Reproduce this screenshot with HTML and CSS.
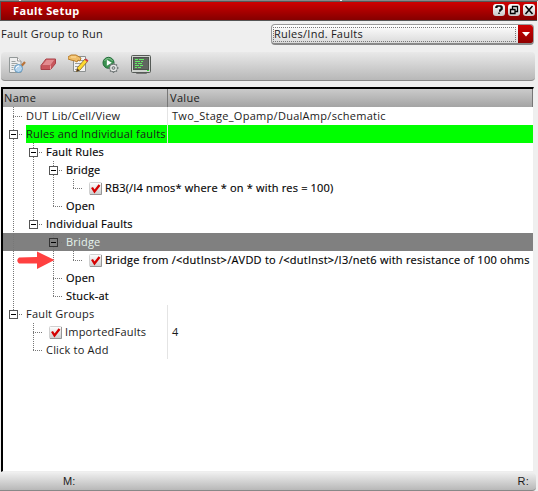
FILE: index.html
```html
<!DOCTYPE html>
<html lang="en">
<head>
<meta charset="utf-8">
<title>Fault Setup</title>
<link rel="stylesheet" href="styles.css">
</head>
<body>
<svg width="0" height="0" class="defs"><defs>
<linearGradient id="btn" x2="0" y2="1"><stop stop-color="#fff"/><stop offset="1" stop-color="#c8c8c8"/></linearGradient>
<linearGradient id="box" x2="0" y2="1"><stop stop-color="#fff"/><stop offset="1" stop-color="#ccc"/></linearGradient>
<symbol id="check" viewBox="0 0 13 13"><rect x=".5" y=".5" width="12" height="12" rx="1" fill="url(#box)" stroke="#d0d0d0"/><path d="M1 12.5h11.5V1" fill="none" stroke="#969696"/><path d="M3 5.500l2.500 4 5-6.500" fill="none" stroke="#d40000" stroke-width="2.300"/></symbol>
</defs></svg>
<div class="window">
  <div class="edge"><i></i><i></i><i></i></div>
  <header class="title"><span>Fault Setup</span>
    <div class="controls">
      <svg width="12" height="12" viewBox="0 0 12 12"><rect width="12" height="12" rx="3" fill="url(#btn)"/><path d="M3 4V3h1V2h4v1h1v2H8v1H7v1H6M6 8.500v1.500" fill="none" stroke="#000" stroke-width="1.5"/></svg>
      <svg width="12" height="12" viewBox="0 0 12 12"><rect width="12" height="12" rx="3" fill="url(#btn)"/><path d="M4.500 5V2.500h5v5H7M4 2.500h6M2.500 5.500h4.500v4h-4.500zM2 5.500h5.500" fill="none" stroke="#000" stroke-width="1.3"/></svg>
      <svg width="12" height="12" viewBox="0 0 12 12"><rect width="12" height="12" rx="3" fill="url(#btn)"/><path d="M2.500 2l7 8M9.500 2l-7 8" stroke="#000" stroke-width="1.5"/></svg>
    </div>
  </header>
  <div class="form"><span class="label">Fault Group to Run</span>
    <div class="select"><span class="choice">Rules/Ind. Faults</span><span class="drop"><svg width="8" height="5" viewBox="0 0 8 5"><path d="M0 0h8L4 4.500z" fill="#fff"/></svg></span></div>
  </div>
  <div class="toolbar">
    <svg width="17" height="17" viewBox="0 0 17 17"><path d="M.5.5h8l3.500 3.500v11.500H.5z" fill="#eee" stroke="#929898"/><path d="M8.500.5V4H12" fill="#fff" stroke="#999"/><path d="M2.500 4.500h4M2.500 6.500h6M2.500 8.500h3M2.500 10.500h2M2.500 12.500h2" stroke="#9da3a3"/><path d="M12.500 9l3.500-4" stroke="#b8733a" stroke-width="2.200"/><circle cx="9.500" cy="11.500" r="4" fill="#b5d5ef" stroke="#6297bd"/><path d="M7 11.500a3 3 0 013-2.500" stroke="#fff" fill="none"/></svg>
    <svg width="17" height="17" viewBox="0 0 17 17"><path d="M1 8.500L6 2h9.500v4.500L10.500 12.500H1z" fill="#c9565c" stroke="#a83e46"/><path d="M1.500 8.500L6.500 2.500h8.500L10.500 8.500z" fill="#e38b8f" stroke="#bd5056" stroke-width=".7"/><path d="M10.500 8.500v4" stroke="#eba0a2"/></svg>
    <svg width="21" height="20" viewBox="0 0 21 20"><path d="M5.500 2.500h12v15h-12z" fill="#f2f2f2" stroke="#8c9090"/><path d="M7 6.500h9M7 9.500h8M7 12.500h5M7 15.500h4" stroke="#9a9e9e"/><path d="M0 3l3-2h5l5 3-1 3-2-1-1 2-2-1-4-1-3-1z" fill="#efbd68" stroke="#b77d2b"/><path d="M3 3h5" stroke="#ffe0a0"/><path d="M8.500 17.500l1-4 7.500-8.500 2.500 2.500-7.500 8.500z" fill="#ffd92f" stroke="#81652b" stroke-width=".8"/><path d="M16.500 5.500l2.500 2.500 1.500-1.500-2.500-2z" fill="#cf3a45"/><path d="M8.500 17.500l1-3 2 2z" fill="#483321"/></svg>
    <svg width="17" height="18" viewBox="0 0 17 18"><circle cx="6.500" cy="6.800" r="5.500" fill="#3b9150" stroke="#206b38"/><path d="M2.500 5a4.500 4.500 0 018 0" fill="none" stroke="#8fcb98"/><path d="M4.800 3.800l5 3-5 3z" fill="#fff"/><g transform="translate(11.500 12)"><circle r="3.800" fill="#ededed" stroke="#676e6e"/><path d="M0-5v10M-5 0H5M-3.500-3.500l7 7M3.500-3.500l-7 7" stroke="#717878" stroke-width="1.500"/><circle r="3.300" fill="#e8e8e8"/><circle r="1.400" fill="#c5c8c8" stroke="#6e7474"/></g></svg>
    <svg width="21" height="20" viewBox="0 0 21 20"><path d="M6 17h9l1 2H5z" fill="#777"/><rect x=".5" y=".5" width="19" height="17" rx="1" fill="#d0d3cf" stroke="#555a56"/><rect x="2.500" y="2.500" width="15" height="12" fill="#606660" stroke="#4d524d"/><path d="M4 4.500h3m1 0h5M4 6.500h5m1 0h2M4 8.500h2m1 0h4M4 10.500h4m1 0h3M4 12.500h2m1 0h3" stroke="#65ee65"/><path d="M16 15.500h2" stroke="#37df37"/></svg>
  </div>
  <main class="tree">
    <div class="head"><span>Name</span><span>Value</span></div>
    <div class="row cols"><div class="name"><i class="g tee"></i><span class="t">DUT Lib/Cell/View</span></div><span class="val">Two_Stage_Opamp/DualAmp/schematic</span></div>
    <div class="row cols green"><div class="name"><i class="g tee"><b></b></i><span class="t">Rules and Individual faults</span></div><span class="val"></span></div>
    <div class="row strong"><i class="g bar"></i><i class="g tee"><b></b></i><span class="t rules">Fault Rules</span></div>
    <div class="row strong"><i class="g bar"></i><i class="g bar"></i><i class="g tee"><b></b></i><span class="t">Bridge</span></div>
    <div class="row strong"><i class="g bar"></i><i class="g bar"></i><i class="g bar"></i><i class="g end"></i><svg class="check"><use href="#check"/></svg><span class="c rb">RB3(/I4 nmos* where * on * with res = 100)</span></div>
    <div class="row strong"><i class="g bar"></i><i class="g bar"></i><i class="g end"></i><span class="t">Open</span></div>
    <div class="row strong"><i class="g bar"></i><i class="g end"><b></b></i><span class="t">Individual Faults</span></div>
    <div class="row selected"><i class="g bar"></i><i class="g"></i><i class="g tee"><b></b></i><span class="t">Bridge</span></div>
    <div class="row strong pointed"><i class="g bar"></i><i class="g"></i><i class="g bar"></i><i class="g end"></i><svg class="check"><use href="#check"/></svg><span class="c br">Bridge from /&lt;dutInst&gt;/AVDD to /&lt;dutInst&gt;/I3/net6 with resistance of 100 ohms</span>
      <svg class="arrow" width="38" height="18" viewBox="0 0 38 18"><path d="M2 6.500l18-.5V.5L37.500 9 20 18V12.500L2 12.500Q-1.500 9.500 2 6.500z" fill="#ff4040"/></svg></div>
    <div class="row strong"><i class="g bar"></i><i class="g"></i><i class="g tee"></i><span class="t">Open</span></div>
    <div class="row strong"><i class="g bar"></i><i class="g"></i><i class="g end"></i><span class="t">Stuck-at</span></div>
    <div class="row cols"><div class="name"><i class="g end"><b></b></i><span class="t">Fault Groups</span></div><span class="val"></span></div>
    <div class="row cols"><div class="name"><i class="g"></i><i class="g tee"></i><svg class="check"><use href="#check"/></svg><span class="c">ImportedFaults</span></div><span class="val">4</span></div>
    <div class="row cols"><div class="name"><i class="g"></i><i class="g end"></i><span class="t">Click to Add</span></div><span class="val"></span></div>
  </main>
  <footer class="status"><span>M:</span><span>R:</span></footer>
</div>
</body>
</html>
```
FILE: styles.css
```css
* { box-sizing: border-box; }
body { margin: 0; background: #efefef; color: #1b1b1b; font: 11px/18px "Open Sans", "Noto Sans", sans-serif; font-feature-settings: "calt" 0; letter-spacing: .2px; }
.defs { position: absolute; }
svg { flex: none; display: block; }
.window { width: 538px; height: 491px; display: flex; flex-direction: column; overflow: hidden; white-space: nowrap; }
.edge { height: 1px; display: flex; gap: 2px; background: #eee; }
.edge i { flex: 1; background: #888; }
.edge i:first-child { flex: 0 0 19px; }
.edge i:nth-child(2) { flex: 0 0 319px; }
.title { height: 20px; margin-right: 1px; padding: 0 2px 0 12px; display: flex; align-items: center; justify-content: space-between; border: solid #555; border-width: 1px 0 1px 1px; background: linear-gradient(#cf0000, #850000); color: #fff; font-weight: bold; }
.title span { letter-spacing: .38px; line-height: 16px; }
.controls { display: flex; gap: 3px; margin-top: -2px; }
.form { height: 31px; padding: 3px 4px 0 1px; display: flex; justify-content: space-between; align-items: flex-start; }
.label { padding-top: 1px; letter-spacing: .27px; }
.select { width: 263px; height: 21px; display: flex; border: 1px solid #999; border-bottom: 2px solid #888; border-radius: 4px; background: linear-gradient(#fff, #dadada); overflow: hidden; }
.choice { flex: 1; margin: 2px 2px 1px 1px; border: 1px dotted #777; line-height: 12px; letter-spacing: .26px; }
.drop { width: 16px; margin-right: -1px; display: flex; align-items: center; justify-content: center; background: linear-gradient(#d00000, #900000); }
.toolbar { height: 29px; margin: 0 3px 0 1px; padding: 0 8px 2px; display: flex; align-items: center; gap: 14px; border-bottom: 1px solid #888; border-radius: 4px; background: linear-gradient(#e9e9e9, #b8b8b8); }
.toolbar svg:nth-child(3) { margin: -2px -2px 0 -3px; }
.toolbar svg:nth-child(4) { margin-left: 1px; }
.toolbar svg:nth-child(5) { margin-left: -2px; }
.tree { height: 385px; margin: 6px 4px 0 1px; border: solid #000; border-width: 2px 1px 1px 2px; border-right-color: #eee; border-bottom-color: #eee; background: #fff; }
.head { height: 18px; display: flex; background: linear-gradient(#cbcbcb, #a4a4a4); letter-spacing: .35px; }
.head span:first-child { width: 165px; padding-left: 1px; border-right: 1px solid #777; }
.head span:last-child { flex: 1; padding-left: 2px; border-right: 1px solid #777; }
.row { height: 18px; display: flex; }
.name { width: 165px; display: flex; border-right: 1px solid #e4e4e4; overflow: hidden; }
.val { flex: 1; padding-left: 4px; letter-spacing: .28px; }
.t, .c { padding-left: 3px; }
.green .t { flex: 1; }
.green .t { margin-left: 3px; padding-left: 0; background: #0f0; }
.green .val { background: #0f0; }
.strong { color: #000; -webkit-text-stroke: .15px #000; }
.rb { letter-spacing: .17px; }
.br { letter-spacing: .235px; }
.selected { background: #808080; color: #e5f3ed; }
.g { flex: none; width: 20px; height: 18px; position: relative; --v: repeating-linear-gradient(#777 0 1px, transparent 1px 2px); --h: repeating-linear-gradient(90deg, #777 0 1px, transparent 1px 2px); background-repeat: no-repeat; }
.bar { background-image: var(--v); background-size: 1px 18px; background-position: 10px 0; }
.tee { background-image: var(--v), var(--h); background-size: 1px 18px, 9px 1px; background-position: 10px 0, 10px 9px; }
.end { background-image: var(--v), var(--h); background-size: 1px 9px, 9px 1px; background-position: 10px 0, 10px 9px; }
.g b { position: absolute; left: 6px; top: 5px; width: 9px; height: 9px; border: 1px solid #555; background: linear-gradient(#000, #000) 1px 3px / 5px 1px no-repeat #fff; }
.selected .g b { background-color: #808080; border-color: #333; }
.check { width: 13px; height: 13px; margin: 3px 0 0 6px; }
.pointed { position: relative; }
.arrow { position: absolute; left: 14px; top: 0; }
.status { height: 18px; margin: 1px 2px 0 0; padding: 0 7px 0 63px; display: flex; justify-content: space-between; border-bottom: 1px solid #888; border-radius: 0 4px 4px 0; background: linear-gradient(#ededed, #b8b8b8); font-family: "Liberation Sans", sans-serif; line-height: 17px; }
```
